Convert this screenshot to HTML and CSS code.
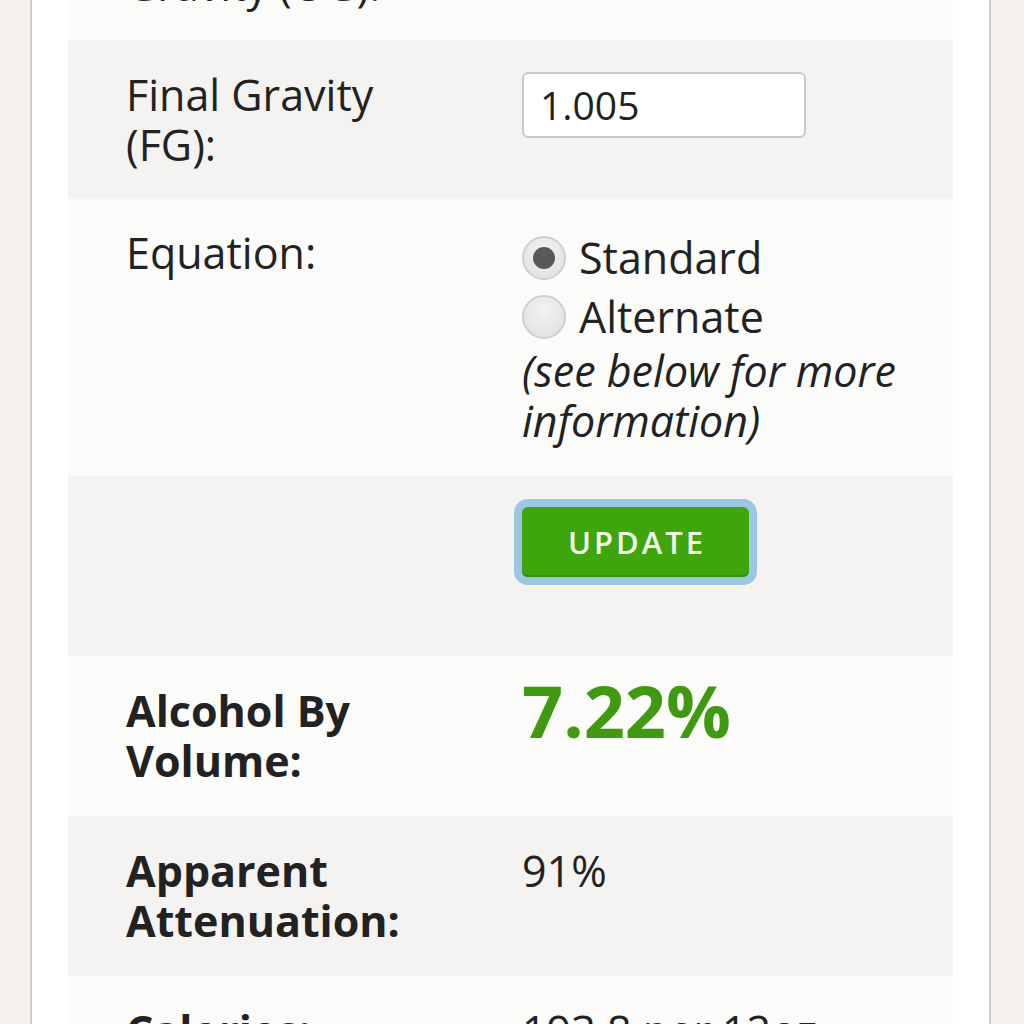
FILE: index.html
```html
<!DOCTYPE html>
<html lang="en">
<head>
<meta charset="utf-8">
<title>ABV Calculator</title>
<link rel="stylesheet" href="styles.css">
</head>
<body>
<div class="card">
  <div class="calc">
    <div class="row light">
      <div class="label">Original<br>Gravity (OG):</div>
      <div class="value"><div class="input">1.072</div></div>
    </div>
    <div class="row dark tight">
      <div class="label">Final Gravity (FG):</div>
      <div class="value"><div class="input">1.005</div></div>
    </div>
    <div class="row light">
      <div class="label">Equation:</div>
      <div class="value">
        <div class="radio-line"><span class="radio checked"></span><span>Standard</span></div>
        <div class="radio-line"><span class="radio"></span><span>Alternate</span></div>
        <div class="note">(see below for more information)</div>
      </div>
    </div>
    <div class="row dark btn-row">
      <div class="label"></div>
      <div class="value"><button class="update">UPDATE</button></div>
    </div>
    <div class="row light">
      <div class="label bold">Alcohol By Volume:</div>
      <div class="value"><div class="abv">7.22%</div></div>
    </div>
    <div class="row dark">
      <div class="label bold">Apparent Attenuation:</div>
      <div class="value">91%</div>
    </div>
    <div class="row light">
      <div class="label bold">Calories:</div>
      <div class="value">193.8 per 12oz</div>
    </div>
  </div>
</div>
</body>
</html>
```
FILE: styles.css
```css
html, body {
  margin: 0;
  padding: 0;
}
body {
  background: #f3f0ed;
  font-family: "Open Sans", "DejaVu Sans", sans-serif;
  color: #222;
  overflow: hidden;
}
.card {
  margin: -120px 33px 0 30px;
  background: #fff;
  border-left: 2px solid #cdcdcd;
  border-right: 2px solid #cdcdcd;
  padding: 0 36px 60px 36px;
}
.calc {
  display: flex;
  flex-direction: column;
}
.row {
  display: grid;
  grid-template-columns: 454px 1fr;
  padding: 30px 0;
  font-size: 43px;
  line-height: 50px;
}
.row.tight {
  padding-bottom: 28px;
}
.light { background: #fbfbf9; }
.dark { background: #f4f3f1; }
.label {
  padding-left: 58px;
  padding-right: 60px;
}
.label.bold { font-weight: 700; }
.input {
  box-sizing: border-box;
  width: 284px;
  height: 66px;
  margin-top: 2px;
  border: 2px solid #c9c9c9;
  border-radius: 6px;
  background: #fff;
  padding-left: 16px;
  font-size: 39px;
  line-height: 62px;
}
.radio-line {
  display: flex;
  align-items: center;
  gap: 13px;
  height: 59px;
}
.radio {
  box-sizing: border-box;
  width: 44px;
  height: 44px;
  border-radius: 50%;
  border: 2px solid #cfcfcf;
  background: radial-gradient(circle at 50% 35%, #f2f2f2, #dedede);
  display: flex;
  align-items: center;
  justify-content: center;
  flex: none;
}
.radio.checked::after {
  content: "";
  width: 22px;
  height: 22px;
  border-radius: 50%;
  background: #585858;
}
.note {
  font-style: italic;
}
.btn-row {
  height: 120px;
}
.update {
  margin-top: 1px;
  width: 227px;
  height: 70px;
  border: none;
  border-radius: 6px;
  background: #3ea50c;
  box-shadow: inset 0 -2px 0 #36900a, 0 0 0 8px #9cc7e2;
  color: #f2f8ea;
  font-family: "Open Sans", "DejaVu Sans", sans-serif;
  font-size: 31px;
  font-weight: 600;
  letter-spacing: 3px;
  padding: 0 0 0 3px;
}
.abv {
  color: #3f9a12;
  font-weight: 700;
  font-size: 72px;
  line-height: 62px;
  margin-top: -7px;
}
```
